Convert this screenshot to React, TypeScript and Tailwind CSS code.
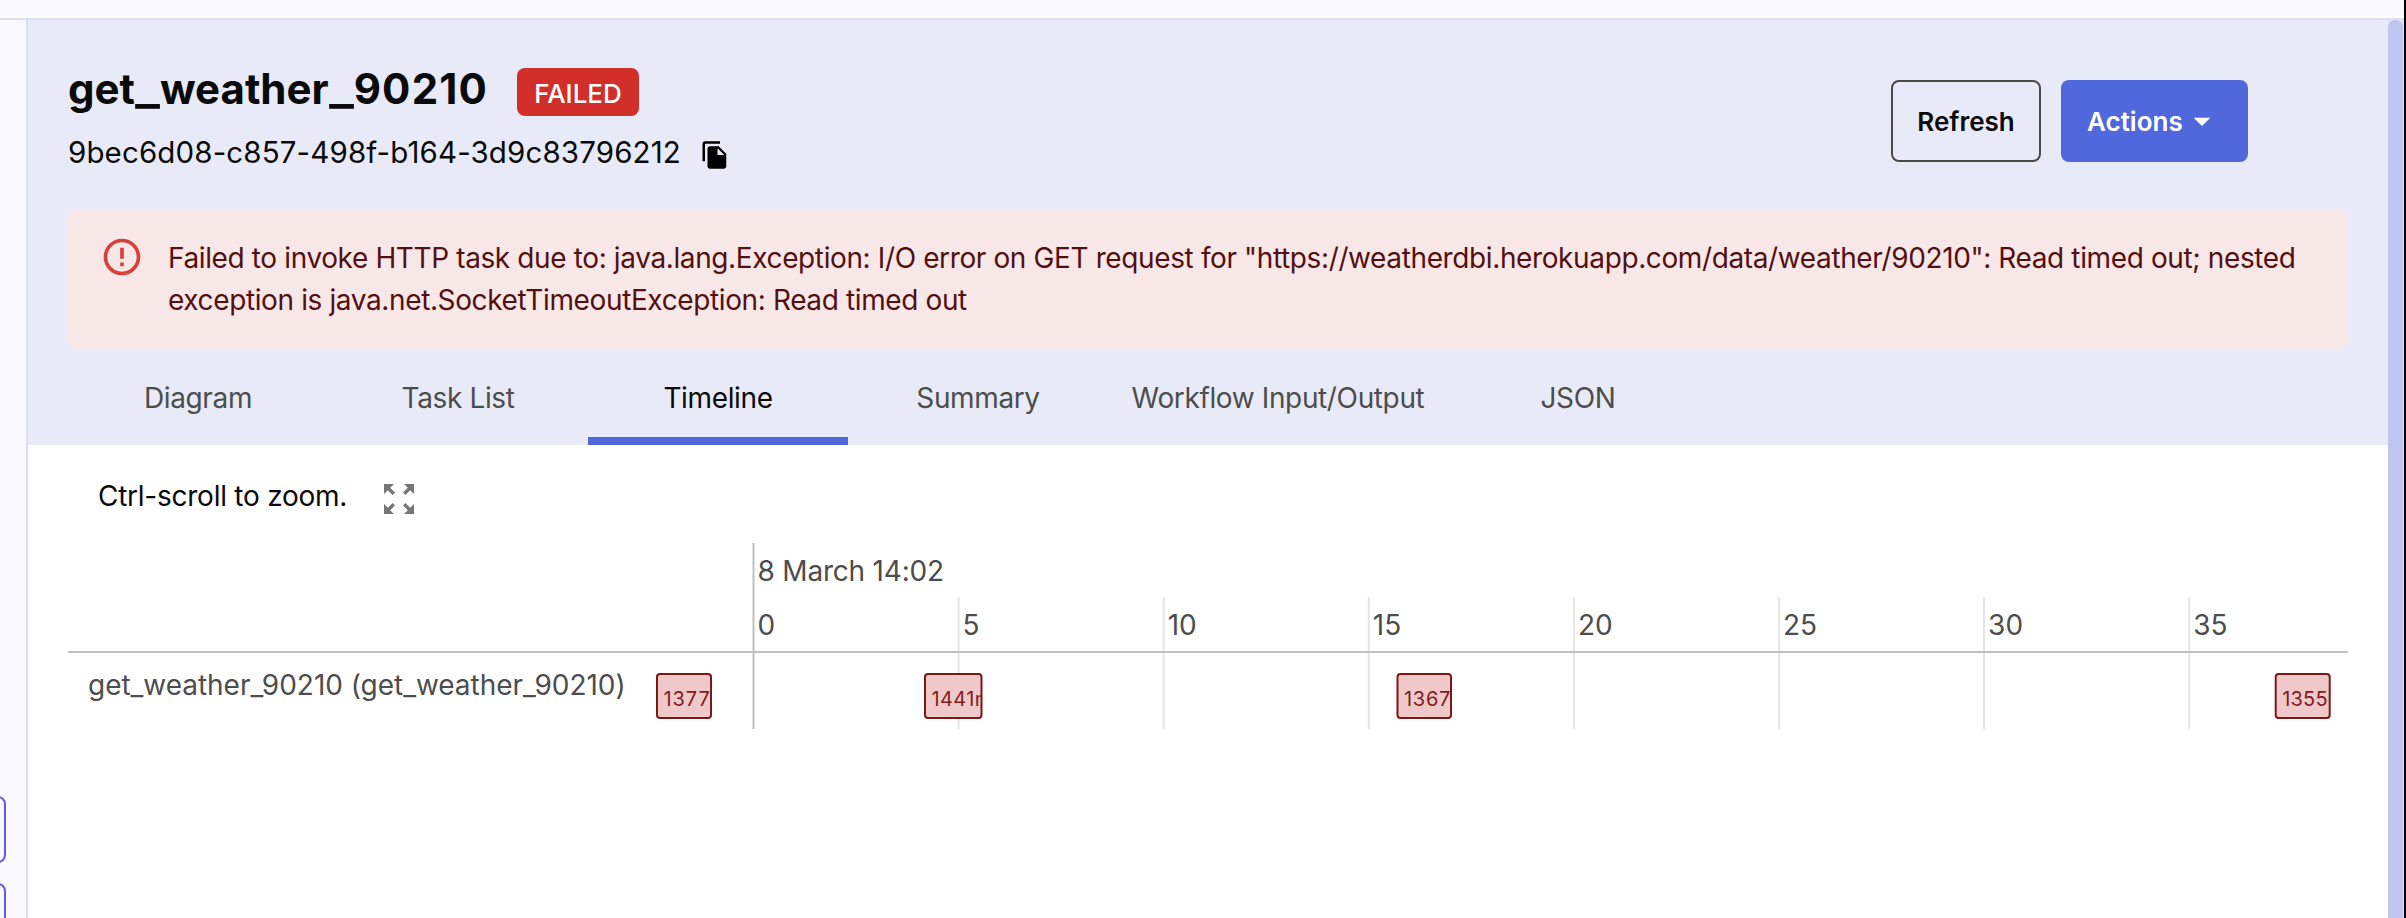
import { MdArrowDropDown, MdErrorOutline, MdFileCopy, MdZoomOutMap } from "react-icons/md";

const tabs = [
  { label: "Diagram", width: "w-[260px]" },
  { label: "Task List", width: "w-[260px]" },
  { label: "Timeline", width: "w-[260px]", active: true },
  { label: "Summary", width: "w-[260px]" },
  { label: "Workflow Input/Output", width: "w-[340px]" },
  { label: "JSON", width: "w-[260px]" },
];

const ticks = [0, 5, 10, 15, 20, 25, 30, 35];

const tasks = [
  { label: "1377ms", x: 588, width: 56, spacing: 0.9 },
  { label: "1441ms", x: 856, width: 58.5, spacing: 0.4 },
  { label: "1367ms", x: 1328.5, width: 55.5, spacing: 0.7 },
  { label: "1355ms", x: 2206.7, width: 56, spacing: 0.2 },
];

function Timeline() {
  return (
    <svg className="block h-[188px] w-[2280px]" viewBox="0 0 2280 188">
      <defs>
        {tasks.map((t, i) => (
          <clipPath id={`task-${i}`} key={t.label}>
            <rect x={t.x} y={130} width={t.width - 1} height={46} />
          </clipPath>
        ))}
      </defs>
      {ticks.map((t, i) => {
        const x = 685.5 + i * 205.1;
        return (
          <g key={t}>
            <line x1={x} x2={x} y1={i === 0 ? 0 : 54} y2={186} stroke={i === 0 ? "#bfbfbf" : "#e5e5e5"} strokeWidth={2} />
            <text x={x + 4} y={91.5} fontSize={28} fill="#4d4d4d">{t}</text>
          </g>
        );
      })}
      <text x={689.5} y={37.5} fontSize={28} letterSpacing={-0.2} fill="#4d4d4d">8 March 14:02</text>
      <rect x={0} y={108} width={2280} height={2} fill="#bfbfbf" />
      <text x={20} y={151.5} fontSize={28} letterSpacing={-0.03} fill="#4d4d4d">get_weather_90210 (get_weather_90210)</text>
      {tasks.map((t, i) => (
        <g key={t.label}>
          <rect x={t.x + 1} y={131} width={t.width - 2} height={44} rx={3} fill="#f0c8ca" stroke="#7a1717" strokeWidth={2} />
          <text x={t.x + 7.5} y={163} fontSize={20} letterSpacing={t.spacing} fill="#7f1d1d" clipPath={`url(#task-${i})`}>{t.label}</text>
        </g>
      ))}
    </svg>
  );
}

function Underscore() {
  return <span className="mr-[5px] inline-block origin-left scale-x-[1.25]">_</span>;
}

export default function App() {
  return (
    <div className="flex h-[918px] w-[2406px] overflow-hidden bg-[#f9f9ff] font-['Inter',sans-serif] text-[28px] text-[#0a0a0a]">
      <div className="flex min-w-0 flex-1 flex-col">
        <div className="h-[18px] shrink-0 border-b-2 border-white" />
        <div className="h-0.5 shrink-0 bg-[#dbe0f7]" />
        <div className="flex min-h-0 flex-1">
          <aside className="flex w-7 shrink-0 flex-col gap-5 overflow-hidden border-r-2 border-[#d7dcf7] pt-[776px]">
            <div className="-ml-10 h-[67px] w-[46px] shrink-0 rounded-[8px] border-2 border-[#6558f0]" />
            <div className="-ml-10 h-[67px] w-[46px] shrink-0 rounded-[8px] border-2 border-[#6558f0]" />
          </aside>
          <main className="flex min-w-0 flex-1 flex-col bg-white">
            <header className="flex h-[425px] shrink-0 flex-col bg-[#e8eaf7] px-10">
              <div className="flex h-[189px] shrink-0 justify-between pr-[100px]">
                <div className="pt-[42px]">
                  <div className="flex h-[54px] items-start">
                    <h1 className="w-[418px] text-[42px] leading-[54px] font-bold whitespace-nowrap">
                      get<Underscore />weather<Underscore /><span className="tracking-[1.2px]">90210</span>
                    </h1>
                    <span className="mt-1.5 ml-[31px] flex h-12 w-[122px] items-center justify-center rounded-[8px] bg-[#d32f2a] pt-0.5 text-[26px] font-medium text-white">FAILED</span>
                  </div>
                  <div className="mt-[14px] flex items-center">
                    <span className="w-[612px] text-[29.5px] leading-[44px] tracking-[0.13px] whitespace-nowrap">9bec6d08-c857-498f-b164-3d9c83796212</span>
                    <MdFileCopy className="mt-1.5 ml-5 size-[30px] text-black" />
                  </div>
                </div>
                <div className="flex gap-5 pt-[60px]">
                  <button className="h-[82px] w-[150px] rounded-[8px] border-2 border-[#494949] text-[26px] font-semibold">Refresh</button>
                  <button className="flex h-[82px] w-[187px] items-center rounded-[8px] bg-[#5068dc] pl-[26px] text-[26px] font-semibold text-white">
                    Actions
                    <MdArrowDropDown className="-ml-px size-10" />
                  </button>
                </div>
              </div>
              <div className="flex h-[140px] shrink-0 rounded-[8px] bg-[#f7e7e7] pl-8">
                <MdErrorOutline className="mt-[26px] size-11 shrink-0 text-[#d9403a]" />
                <p className="mt-7 ml-6 w-[2142px] leading-[42px] tracking-[-0.38px] text-[#541010]">
                  Failed to invoke HTTP task due to: java.lang.Exception: I/O error on GET request for "https://weatherdbi.herokuapp.com/data/weather/90210": Read timed out; nested
                  exception is java.net.SocketTimeoutException: Read timed out
                </p>
              </div>
              <nav className="flex flex-1">
                {tabs.map((t) => (
                  <button
                    key={t.label}
                    className={`${t.width} border-b-8 pt-2.5 tracking-[-0.37px] ${t.active ? "border-[#5068dc] text-[#0a0a0a]" : "border-transparent text-[#4d4d4d]"}`}
                  >
                    {t.label}
                  </button>
                ))}
              </nav>
            </header>
            <section className="flex flex-col px-10">
              <div className="flex h-[98px] items-start pt-[30px] pl-[30px]">
                <span className="w-[249px] leading-[42px] tracking-[-0.25px] whitespace-nowrap">Ctrl-scroll to zoom.</span>
                <MdZoomOutMap className="mt-1 ml-8 size-10 text-[#757575]" />
              </div>
              <Timeline />
            </section>
          </main>
          <div className="w-4 shrink-0 bg-[#dfe4f8]">
            <div className="h-[940px] w-[15px] rounded-t-full bg-[#bec6f1]" />
          </div>
        </div>
      </div>
      <div className="w-0.5 shrink-0 bg-black" />
    </div>
  );
}
